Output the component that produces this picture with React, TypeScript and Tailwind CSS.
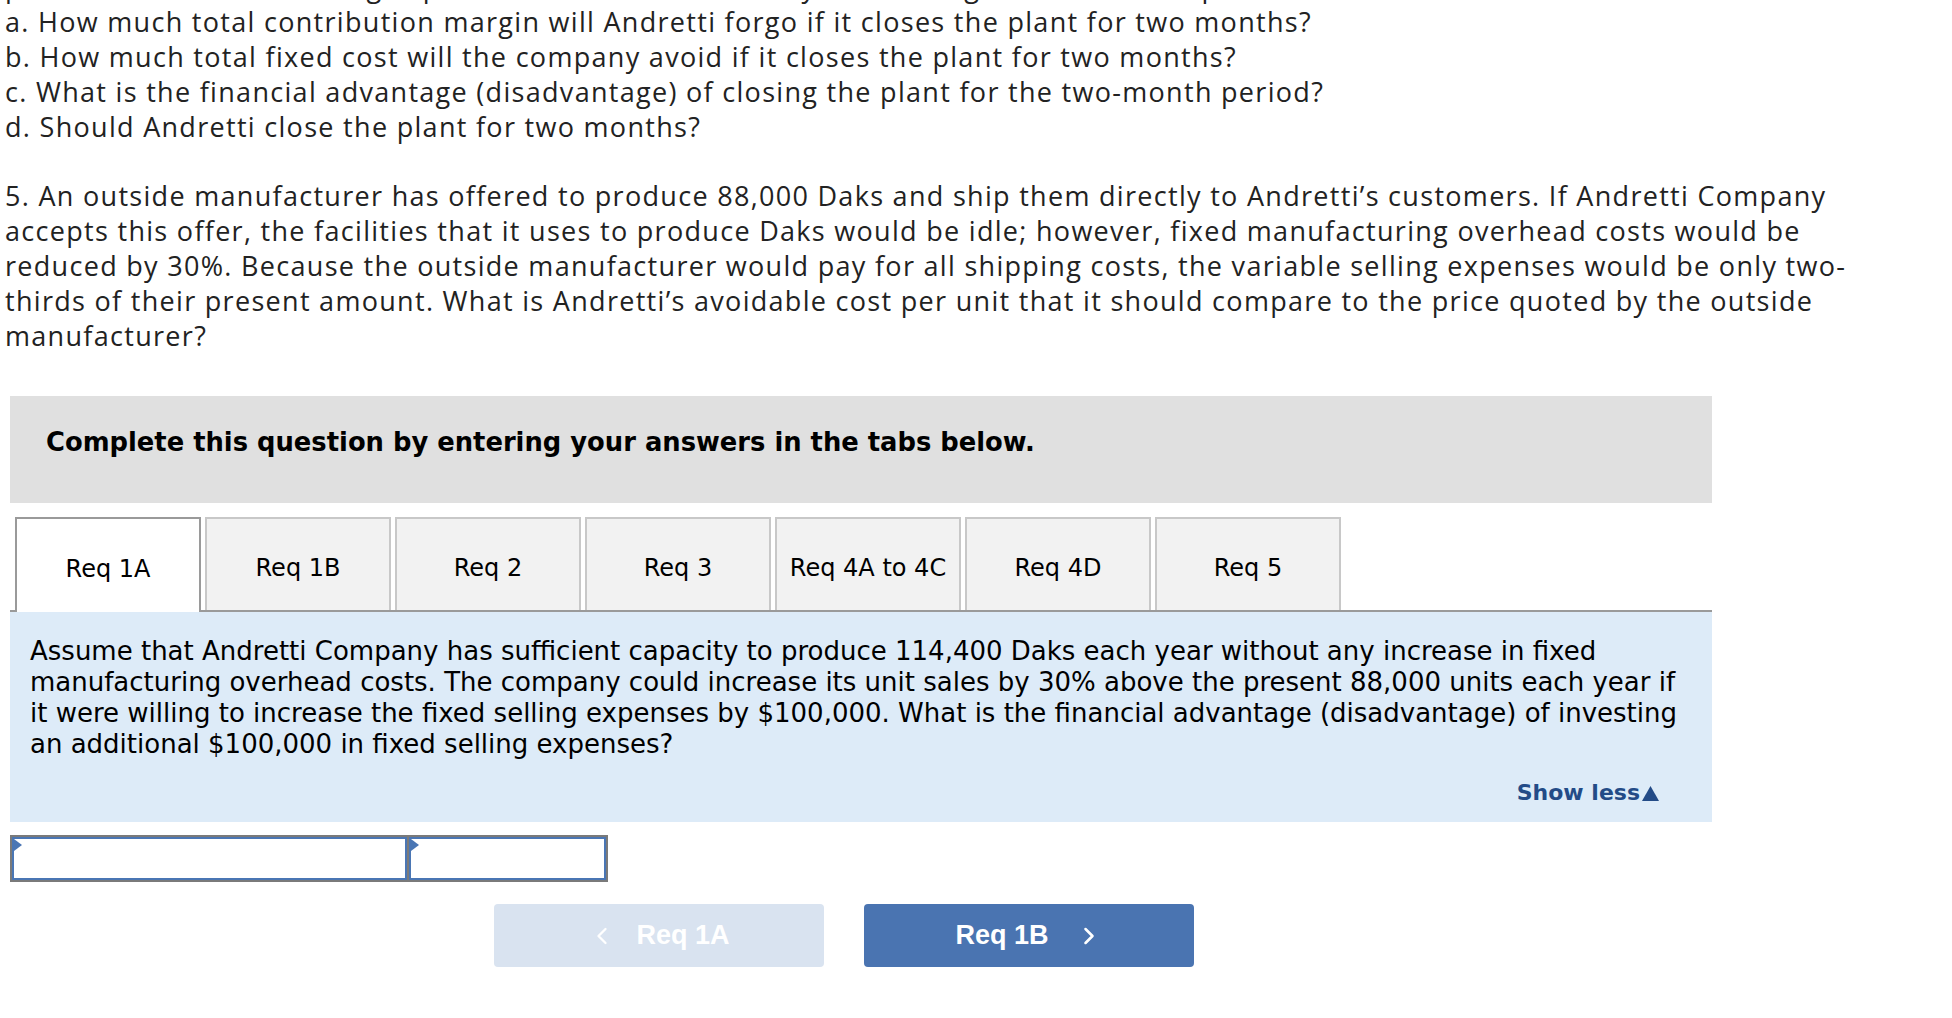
import { ChevronLeft, ChevronRight } from 'lucide-react';

const tabs = ['Req 1A', 'Req 1B', 'Req 2', 'Req 3', 'Req 4A to 4C', 'Req 4D', 'Req 5'];

const partA = [
  'period and the fixed selling expenses would be reduced by 20% during the two-month period.',
  'a. How much total contribution margin will Andretti forgo if it closes the plant for two months?',
  'b. How much total fixed cost will the company avoid if it closes the plant for two months?',
  'c. What is the financial advantage (disadvantage) of closing the plant for the two-month period?',
  'd. Should Andretti close the plant for two months?',
];

const part5 = [
  '5. An outside manufacturer has offered to produce 88,000 Daks and ship them directly to Andretti\u2019s customers. If Andretti Company',
  'accepts this offer, the facilities that it uses to produce Daks would be idle; however, fixed manufacturing overhead costs would be',
  'reduced by 30%. Because the outside manufacturer would pay for all shipping costs, the variable selling expenses would be only two-',
  'thirds of their present amount. What is Andretti\u2019s avoidable cost per unit that it should compare to the price quoted by the outside',
  'manufacturer?',
];

const panel = [
  'Assume that Andretti Company has sufficient capacity to produce 114,400 Daks each year without any increase in fixed',
  'manufacturing overhead costs. The company could increase its unit sales by 30% above the present 88,000 units each year if',
  'it were willing to increase the fixed selling expenses by $100,000. What is the financial advantage (disadvantage) of investing',
  'an additional $100,000 in fixed selling expenses?',
];

function Cell({ width }: { width: string }) {
  return (
    <div className={`relative h-[43px] border-2 border-[#4a76b4] bg-white ${width}`}>
      <span className="absolute left-0 top-0 h-0 w-0 border-y-[6px] border-l-[8px] border-y-transparent border-l-[#4a76b4]" />
    </div>
  );
}

export default function App() {
  return (
    <div className="h-[1018px] w-[1952px] overflow-hidden bg-white">
      <div className="-mt-[31px] pl-[5px] font-['Open_Sans','Liberation_Sans',sans-serif] text-[27px] leading-[35px] tracking-[1.3px] text-[#222]">
        {partA.map((l) => (
          <p key={l} className="whitespace-nowrap">{l}</p>
        ))}
        <div className="mt-[34px]">
          {part5.map((l) => (
            <p key={l} className="whitespace-nowrap">{l}</p>
          ))}
        </div>
      </div>

      <div className="ml-[10px] mt-[43px] w-[1702px] font-['DejaVu_Sans','Verdana',sans-serif] text-black">
        <div className="h-[107px] bg-[#e0e0e0] pl-[36px] pt-[31px] text-[25.8px] font-bold leading-[30px]">
          Complete this question by entering your answers in the tabs below.
        </div>

        <div className="mt-[14px] flex items-end gap-[4px] border-b-2 border-[#9a9a9a] pl-[5px]">
          {tabs.map((t, i) =>
            i === 0 ? (
              <div
                key={t}
                className="-mb-[2px] flex h-[95px] w-[186px] items-center justify-center border-2 border-b-0 border-[#9a9a9a] bg-white pt-[6px] text-[24px]"
              >
                {t}
              </div>
            ) : (
              <div
                key={t}
                className="flex h-[93px] w-[186px] items-center justify-center border-2 border-b-0 border-[#c8c8c8] bg-[#f2f2f2] pt-[6px] text-[24px]"
              >
                {t}
              </div>
            ),
          )}
        </div>

        <div className="flex h-[210px] flex-col bg-[#ddebf8] px-[20px] pt-[24px]">
          <div className="text-[26px] leading-[31px]">
            {panel.map((l) => (
              <p key={l} className="whitespace-nowrap">{l}</p>
            ))}
          </div>
          <div className="mt-[20px] flex justify-end pr-[33px]">
            <span className="flex items-center text-[22px] font-bold leading-[26px] text-[#234b87]">
              Show less
              <svg width="17" height="15" viewBox="0 0 17 15" className="ml-[2px]">
                <path d="M8.5 0 17 15H0Z" fill="#234b87" />
              </svg>
            </span>
          </div>
        </div>

        <div className="mt-[13px] flex w-[598px] gap-[2px] bg-[#7a7a7a] p-[2px]">
          <Cell width="w-[395px]" />
          <Cell width="flex-1" />
        </div>

        <div className="mt-[22px] flex gap-[40px] pl-[484px] font-['Liberation_Sans','Arial',sans-serif] text-[27px] font-bold text-white">
          <div className="flex h-[63px] w-[330px] items-center justify-center gap-[20px] rounded-[4px] bg-[#d9e3f0]">
            <ChevronLeft size={28} strokeWidth={2} />
            <span>Req 1A</span>
          </div>
          <div className="flex h-[63px] w-[330px] items-center justify-center gap-[26px] rounded-[4px] bg-[#4a74b1]">
            <span>Req 1B</span>
            <ChevronRight size={28} strokeWidth={2.2} />
          </div>
        </div>
      </div>
    </div>
  );
}
